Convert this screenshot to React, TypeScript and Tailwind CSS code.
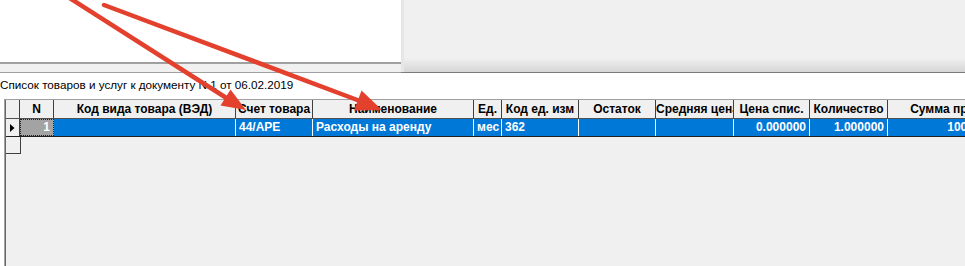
import React from "react";

const cols = [
  { w: 14, h: "", v: "", align: "left" },
  { w: 34, h: "N", v: "1", align: "right" },
  { w: 182, h: "Код вида товара (ВЭД)", v: "", align: "left" },
  { w: 77, h: "Счет товара", v: "44/АРЕ", align: "left" },
  { w: 161, h: "Наименование", v: "Расходы на аренду", align: "left" },
  { w: 28, h: "Ед.", v: "мес", align: "left" },
  { w: 77, h: "Код ед. изм", v: "362", align: "left" },
  { w: 77, h: "Остаток", v: "", align: "right" },
  { w: 78, h: "Средняя цена", v: "", align: "right" },
  { w: 76, h: "Цена спис.", v: "0.000000", align: "right" },
  { w: 78, h: "Количество", v: "1.000000", align: "right" },
  { w: 140, h: "Сумма продажи", v: "10000.000000", align: "right" },
];

function Arrows() {
  const red = "#e3402e";
  return (
    <svg
      className="absolute left-0 top-0 pointer-events-none"
      width={965}
      height={266}
      viewBox="0 0 965 266"
    >
      <line x1={68} y1={-3} x2={228} y2={99} stroke={red} strokeWidth={4.5} strokeLinecap="round" />
      <polygon points="246,110 220.5,105.5 230.5,89.5" fill={red} />
      <line x1={104} y1={5} x2={360} y2={101} stroke={red} strokeWidth={4.5} strokeLinecap="round" />
      <polygon points="382,110 354,110.5 361.5,90.5" fill={red} />
    </svg>
  );
}

export default function App() {
  return (
    <div
      className="relative w-[965px] h-[266px] overflow-hidden bg-white"
      style={{ fontFamily: '"Liberation Sans", Arial, sans-serif' }}
    >
      {/* top section */}
      <div className="flex h-[73px]">
        <div className="w-[401px] flex flex-col">
          <div className="h-[62px] bg-white" />
          <div className="h-[2px] bg-[#a0a0a0]" />
          <div className="h-[8px] bg-[#f0f0f0]" />
          <div className="h-[1px] bg-[#a0a0a0]" />
        </div>
        <div className="w-[3px] flex flex-col">
          <div className="flex-1 bg-[#e6e6e6]" />
          <div className="h-[1px] bg-[#808080]" />
        </div>
        <div className="flex-1 flex flex-col">
          <div className="h-[58px] bg-[#f0f0f0]" />
          <div className="h-[14px] bg-gradient-to-b from-[#f0f0f0] to-[#d6d6d6]" />
          <div className="h-[1px] bg-[#7a7a7a]" />
        </div>
      </div>

      {/* caption */}
      <div className="h-[26px] pt-[4px] text-[11.7px] leading-[16px] text-black whitespace-nowrap">
        Список товаров и услуг к документу N 1 от 06.02.2019
      </div>

      {/* grid */}
      <div className="ml-[4px] h-[167px] border-l border-l-[#a0a0a0] border-t border-t-[#a0a0a0] bg-[#f0f0f0]">
        <div className="border-l border-l-[#696969] h-full">
          {/* header */}
          <div className="flex h-[19px] border-b border-b-[#505050]">
            {cols.map((c, i) => (
              <div
                key={i}
                style={{ width: c.w }}
                className="shrink-0 border-r border-r-[#404040] bg-[#f0f0f0] overflow-hidden whitespace-nowrap text-center text-[12px] leading-[18px] font-bold text-black"
              >
                {c.h}
              </div>
            ))}
          </div>
          {/* data row */}
          <div className="flex h-[18px] border-b border-b-[#202020]">
            {cols.map((c, i) => {
              if (i === 0) {
                return (
                  <div
                    key={i}
                    style={{ width: c.w }}
                    className="shrink-0 border-r border-r-[#404040] bg-[#f0f0f0] flex items-center pl-[4px]"
                  >
                    <svg width="5" height="8" viewBox="0 0 5 8">
                      <polygon points="0,0 4.5,4 0,8" fill="#000" />
                    </svg>
                  </div>
                );
              }
              if (i === 1) {
                return (
                  <div
                    key={i}
                    style={{ width: c.w }}
                    className="shrink-0 bg-[#a3a3a3] border border-dotted border-[#202020] text-right pr-[3px] text-[12px] leading-[15px] font-bold text-white"
                  >
                    {c.v}
                  </div>
                );
              }
              return (
                <div
                  key={i}
                  style={{ width: c.w, textAlign: c.align as "left" | "right" }}
                  className="shrink-0 bg-[#0078d7] border-r border-r-white overflow-hidden whitespace-nowrap px-[3px] text-[12px] leading-[17px] font-bold text-white"
                >
                  {c.v}
                </div>
              );
            })}
          </div>
          {/* new row indicator */}
          <div className="w-[15px] h-[17px] border-r border-b border-r-[#404040] border-b-[#404040] bg-[#f0f0f0]" />
        </div>
      </div>

      <Arrows />
    </div>
  );
}
